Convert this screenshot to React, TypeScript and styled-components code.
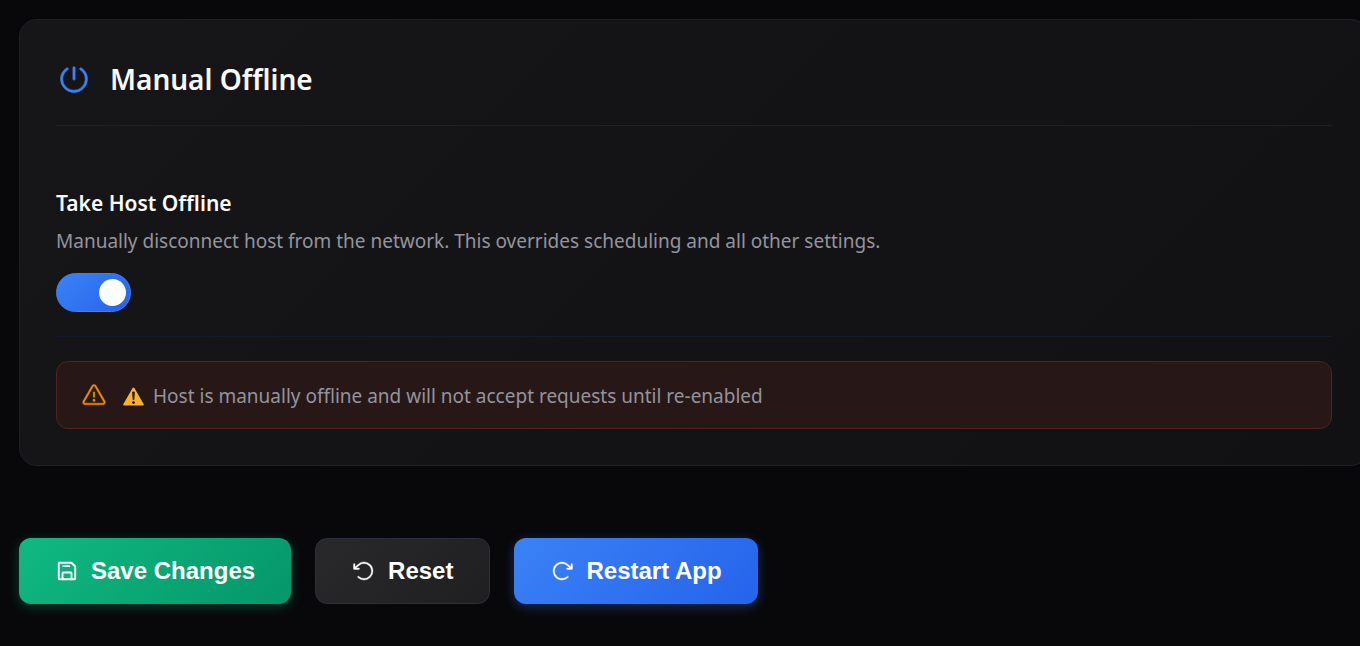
import React, { useState } from "react";
import styled, { createGlobalStyle, css } from "styled-components";
import {
  PiArrowClockwise,
  PiArrowCounterClockwise,
  PiPower,
  PiWarning,
} from "react-icons/pi";

const GlobalStyle = createGlobalStyle`
  * { box-sizing: border-box; }
  body {
    margin: 0;
    min-height: 100vh;
    overflow-x: hidden;
    background: #08080a;
    color: #fafafa;
    font-family: "Segoe UI", "Noto Sans", "Open Sans", sans-serif;
  }
`;

const Page = styled.main`
  padding: 19px 0 42px 19px;
  overflow: hidden;
`;

const Card = styled.section`
  margin-right: -9px;
  padding: 36px;
  border: 1px solid #1b212b;
  border-radius: 18px;
  background: linear-gradient(135deg, #161618 0%, #111113 100%);
`;

const heavierIcon = css`
  svg[stroke="currentColor"] {
    flex: none;
    stroke-width: 4px;
  }
`;

const CardHeader = styled.header`
  display: flex;
  align-items: center;
  gap: 18px;
  height: 70px;
  padding-bottom: 24px;
  border-bottom: 1px solid #1b212b;
  svg { color: #3b82f6; }
  ${heavierIcon}
`;

const Title = styled.h2`
  margin: 0;
  font-size: 28px;
  line-height: 44px;
  font-weight: 600;
`;

const Setting = styled.div`
  display: flex;
  flex-direction: column;
  align-items: flex-start;
  padding: 60px 0 24px;
  border-bottom: 1px solid #141a29;
`;

const SettingLabel = styled.label`
  margin-bottom: 3px;
  font-size: 21px;
  line-height: 34px;
  font-weight: 600;
`;

const SettingText = styled.p`
  margin: 0 0 14px;
  font-size: 19px;
  line-height: 36px;
  color: #94949e;
`;

const Toggle = styled.input`
  appearance: none;
  display: flex;
  align-items: center;
  width: 75px;
  height: 39px;
  margin: 0;
  padding: 0 4px;
  border: 1px solid #2a3550;
  border-radius: 20px;
  background: #27272a;
  cursor: pointer;

  &::before {
    content: "";
    width: 27px;
    height: 27px;
    border-radius: 50%;
    background: #ffffff;
  }

  &:checked {
    justify-content: flex-end;
    border-color: #3b82f6;
    background: linear-gradient(135deg, #3b82f6, #2563eb);
  }
`;

const Alert = styled.div`
  display: flex;
  align-items: center;
  gap: 16px;
  min-height: 68px;
  margin-top: 24px;
  padding: 12px 24px;
  border: 1px solid #50241a;
  border-radius: 12px;
  background: #271817;
  color: #f08c00;
  ${heavierIcon}
`;

const AlertText = styled.span`
  display: flex;
  align-items: center;
  gap: 9px;
  padding-top: 2px;
  font-size: 19px;
  line-height: 30px;
  color: #94949e;
`;

const Actions = styled.div`
  display: flex;
  flex-wrap: wrap;
  gap: 24px;
  margin-top: 72px;
`;

const tones = {
  save: css`
    background: linear-gradient(135deg, #10b981, #059669);
    box-shadow: 0 3px 12px rgba(16, 185, 129, 0.3);
  `,
  neutral: css`
    border: 1px solid #2a3042;
    background: linear-gradient(135deg, #29292b, #1f1f21);
  `,
  primary: css`
    background: linear-gradient(135deg, #3b82f6, #2563eb);
    box-shadow: 0 3px 12px rgba(59, 130, 246, 0.3);
  `,
};

const ActionButton = styled.button<{ $tone: keyof typeof tones }>`
  display: inline-flex;
  align-items: center;
  gap: 12px;
  height: 66px;
  padding: 0 36px;
  border: 0;
  border-radius: 12px;
  color: #ffffff;
  font-family: Arial, "Liberation Sans", sans-serif;
  font-size: 24px;
  font-weight: 600;
  cursor: pointer;
  ${({ $tone }) => tones[$tone]}
  ${heavierIcon}
`;

const FloppyIcon = () => (
  <svg width="24" height="24" viewBox="0 0 256 256" fill="none" aria-hidden="true">
    <g stroke="currentColor" strokeWidth="20" strokeLinecap="round" strokeLinejoin="round">
      <path d="M216 83.3V208a8 8 0 0 1-8 8H48a8 8 0 0 1-8-8V48a8 8 0 0 1 8-8h124.7a8 8 0 0 1 5.6 2.3l35.4 35.4a8 8 0 0 1 2.3 5.6Z" />
      <path d="M80 216v-64a8 8 0 0 1 8-8h80a8 8 0 0 1 8 8v64M152 76H88" />
    </g>
  </svg>
);

const WarningSign = () => (
  <svg width="21" height="21" viewBox="0 0 21 21" aria-hidden="true">
    <path d="M9.6 2.1Q10.5.8 11.4 2.1L20.6 18Q21.2 19.6 19.8 19.6H1.2Q-.2 19.6.4 18Z" fill="#ffb02e" />
    <path d="M9.1 6.6Q9.1 5.5 10.5 5.5T11.9 6.6L11.3 13.4Q11.1 14.2 10.5 14.2T9.7 13.4Z" fill="#211b19" />
    <circle cx="10.5" cy="16.6" r="1.4" fill="#211b19" />
  </svg>
);

export default function App() {
  const [offline, setOffline] = useState(true);
  return (
    <>
      <GlobalStyle />
      <Page>
        <Card>
          <CardHeader>
            <PiPower size={36} />
            <Title>Manual Offline</Title>
          </CardHeader>
          <Setting>
            <SettingLabel htmlFor="offline">Take Host Offline</SettingLabel>
            <SettingText id="offline-text">
              Manually disconnect host from the network. This overrides scheduling and all other settings.
            </SettingText>
            <Toggle
              id="offline"
              type="checkbox"
              aria-describedby="offline-text"
              checked={offline}
              onChange={(e) => setOffline(e.target.checked)}
            />
          </Setting>
          {offline && (
            <Alert role="status">
              <PiWarning size={26} />
              <AlertText>
                <WarningSign />
                Host is manually offline and will not accept requests until re-enabled
              </AlertText>
            </Alert>
          )}
        </Card>
        <Actions>
          <ActionButton type="button" $tone="save">
            <FloppyIcon />
            Save Changes
          </ActionButton>
          <ActionButton type="button" $tone="neutral">
            <PiArrowCounterClockwise size={24} />
            Reset
          </ActionButton>
          <ActionButton type="button" $tone="primary">
            <PiArrowClockwise size={24} />
            Restart App
          </ActionButton>
        </Actions>
      </Page>
    </>
  );
}
